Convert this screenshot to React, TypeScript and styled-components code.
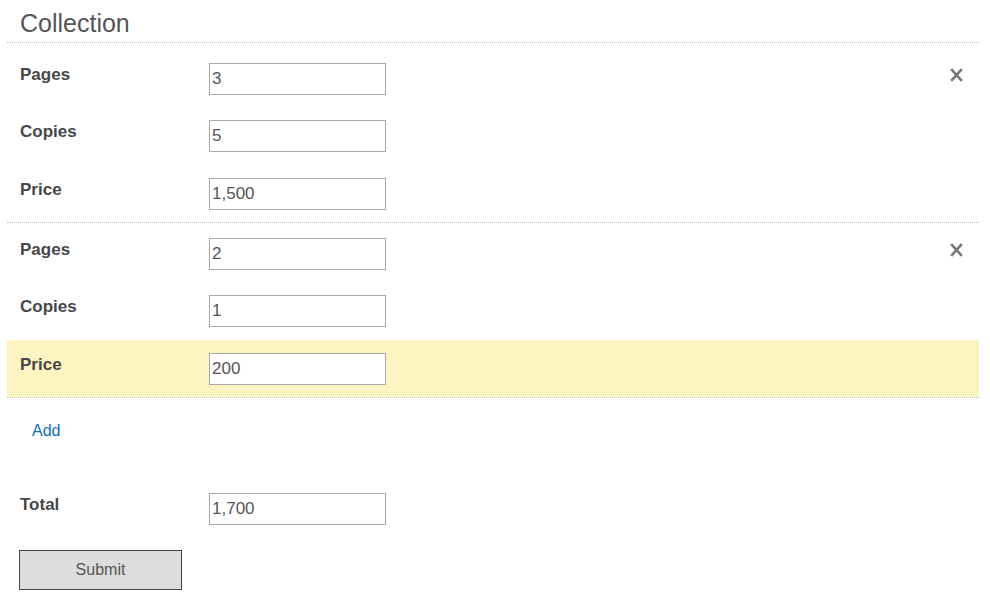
import React from "react";
import styled, { createGlobalStyle } from "styled-components";

const GlobalStyle = createGlobalStyle`
  html, body {
    margin: 0;
    padding: 0;
    background: #ffffff;
    font-family: "Liberation Sans", Arial, sans-serif;
    color: #444;
  }
  * { box-sizing: border-box; }
`;

const Page = styled.form`
  width: 972px;
  margin-left: 7px;
  font-family: "Liberation Sans", Arial, sans-serif;
`;

const Header = styled.h1`
  margin: 0 0 5px;
  padding: 8px 13px 4px;
  font-size: 25px;
  line-height: 30px;
  font-weight: normal;
  color: #555;
  border-bottom: 1px dotted #bdbdbd;
`;

const Group = styled.div`
  padding-top: 1.5px;
  border-bottom: 1px dotted #bdbdbd;
`;

const Row = styled.div<{ $highlight?: boolean }>`
  display: flex;
  align-items: flex-start;
  height: 57.5px;
  padding: 13px 0 0 13px;
  background: ${(p) => (p.$highlight ? "#fcf5c2" : "transparent")};
`;

const Label = styled.label`
  width: 189px;
  flex: none;
  padding-top: 2px;
  font-size: 17px;
  line-height: 20px;
  font-weight: bold;
  color: #474747;
`;

const Field = styled.input`
  width: 177px;
  height: 32px;
  flex: none;
  margin: 0;
  padding: 0 2px;
  border: 1px solid #a9a9a9;
  border-radius: 0;
  background: #fff;
  font-family: "Liberation Sans", Arial, sans-serif;
  font-size: 17px;
  color: #555;
  outline: none;
`;

const RemoveButton = styled.button`
  margin-left: auto;
  margin-right: 11px;
  width: 24px;
  height: 24px;
  padding: 0;
  border: none;
  background: transparent;
  display: flex;
  align-items: center;
  justify-content: center;
  cursor: pointer;
`;

const AddArea = styled.div`
  padding: 23px 25px 39px;
`;

const AddLink = styled.a`
  font-size: 16px;
  line-height: 20px;
  color: #0b6fc0;
  text-decoration: none;
  cursor: pointer;
`;

const SubmitButton = styled.button`
  margin: 12.5px 0 0 12px;
  width: 163px;
  height: 40px;
  border: 1px solid #444;
  border-radius: 0;
  background: #dddddd;
  color: #555;
  font-family: "Liberation Sans", Arial, sans-serif;
  font-size: 16px;
  cursor: pointer;
`;

const CloseIcon = () => (
  <svg width="13" height="14" viewBox="0 0 13 14" aria-hidden="true">
    <path d="M1.2 1.2 L11.8 12.8 M11.8 1.2 L1.2 12.8" stroke="#777" strokeWidth="2.6" fill="none" />
  </svg>
);

type Item = { pages: string; copies: string; price: string };

const items: Item[] = [
  { pages: "3", copies: "5", price: "1,500" },
  { pages: "2", copies: "1", price: "200" },
];

export default function App() {
  return (
    <>
      <GlobalStyle />
      <Page onSubmit={(e) => e.preventDefault()}>
        <Header>Collection</Header>
        {items.map((item, i) => (
          <Group key={i}>
            <Row>
              <Label>Pages</Label>
              <Field defaultValue={item.pages} />
              <RemoveButton type="button" aria-label="Remove">
                <CloseIcon />
              </RemoveButton>
            </Row>
            <Row>
              <Label>Copies</Label>
              <Field defaultValue={item.copies} />
            </Row>
            <Row $highlight={i === 1}>
              <Label>Price</Label>
              <Field defaultValue={item.price} />
            </Row>
          </Group>
        ))}
        <AddArea>
          <AddLink>Add</AddLink>
        </AddArea>
        <Row>
          <Label>Total</Label>
          <Field defaultValue="1,700" />
        </Row>
        <SubmitButton type="submit">Submit</SubmitButton>
      </Page>
    </>
  );
}
